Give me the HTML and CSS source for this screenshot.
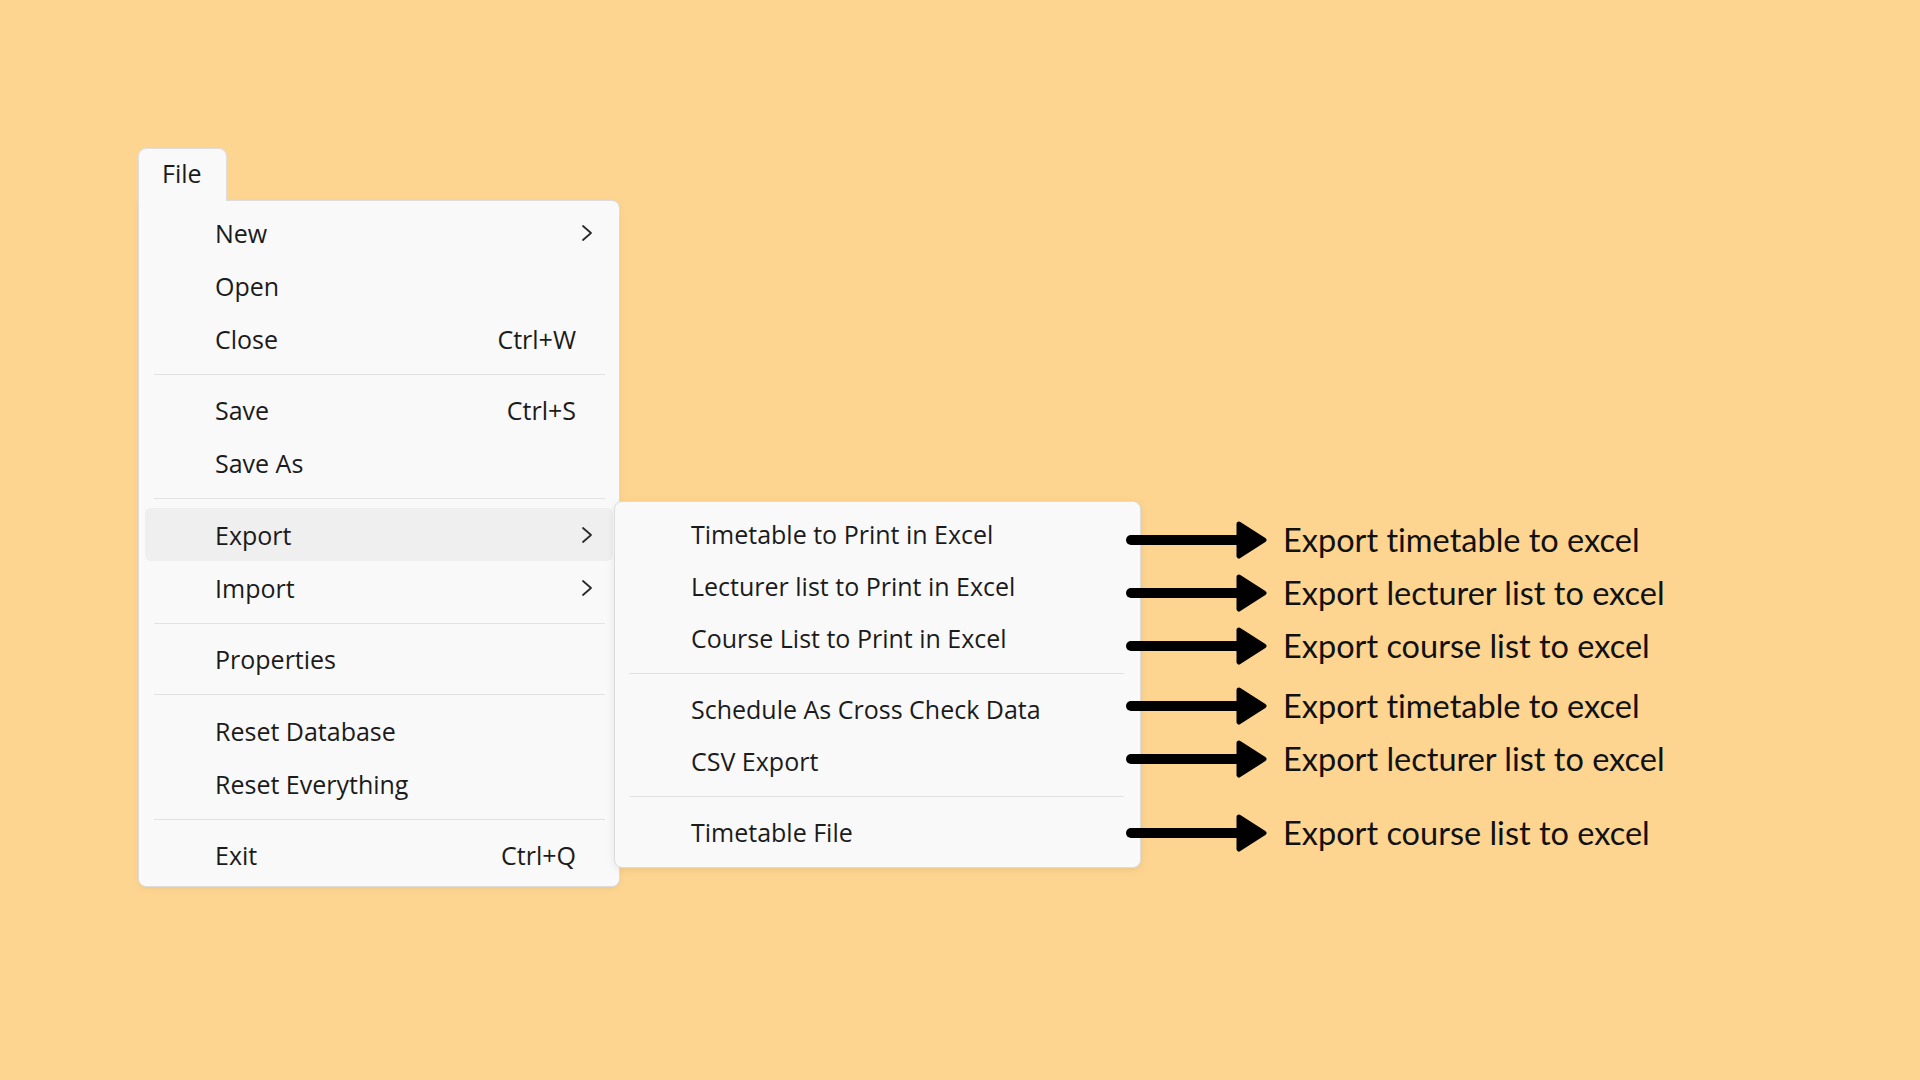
FILE: index.html
```html
<!DOCTYPE html>
<html lang="en">
<head>
  <meta charset="UTF-8" />
  <meta name="viewport" content="width=device-width, initial-scale=1.0"/>
  <title>File menu - Export</title>
  <link rel="stylesheet" href="styles.css">
</head>
<body>
  <div class="stage">
    <div class="menu-column">
      <div class="tab">File</div>
      <div class="menu">
        <div class="item"><span>New</span><svg class="chevron" viewBox="0 0 12 18"><polyline points="2,2 10,9 2,16"/></svg></div>
        <div class="item"><span>Open</span></div>
        <div class="item"><span>Close</span><span class="key">Ctrl+W</span></div>
        <div class="sep"></div>
        <div class="item"><span>Save</span><span class="key">Ctrl+S</span></div>
        <div class="item"><span>Save As</span></div>
        <div class="sep"></div>
        <div class="item active"><span>Export</span><svg class="chevron" viewBox="0 0 12 18"><polyline points="2,2 10,9 2,16"/></svg></div>
        <div class="item"><span>Import</span><svg class="chevron" viewBox="0 0 12 18"><polyline points="2,2 10,9 2,16"/></svg></div>
        <div class="sep"></div>
        <div class="item"><span>Properties</span></div>
        <div class="sep"></div>
        <div class="item"><span>Reset Database</span></div>
        <div class="item"><span>Reset Everything</span></div>
        <div class="sep"></div>
        <div class="item"><span>Exit</span><span class="key">Ctrl+Q</span></div>
      </div>
    </div>

    <div class="menu submenu">
      <div class="item"><span>Timetable to Print in Excel</span></div>
      <div class="item"><span>Lecturer list to Print in Excel</span></div>
      <div class="item"><span>Course List to Print in Excel</span></div>
      <div class="sep"></div>
      <div class="item"><span>Schedule As Cross Check Data</span></div>
      <div class="item"><span>CSV Export</span></div>
      <div class="sep"></div>
      <div class="item"><span>Timetable File</span></div>
    </div>

    <div class="notes">
      <div class="note">
        <svg class="arrow" viewBox="0 0 141 40"><line x1="5" y1="20" x2="118" y2="20"/><polygon points="113,4 138,20 113,36"/></svg>
        <span>Export timetable to excel</span>
      </div>
      <div class="note">
        <svg class="arrow" viewBox="0 0 141 40"><line x1="5" y1="20" x2="118" y2="20"/><polygon points="113,4 138,20 113,36"/></svg>
        <span>Export lecturer list to excel</span>
      </div>
      <div class="note">
        <svg class="arrow" viewBox="0 0 141 40"><line x1="5" y1="20" x2="118" y2="20"/><polygon points="113,4 138,20 113,36"/></svg>
        <span>Export course list to excel</span>
      </div>
      <div class="note gap-s">
        <svg class="arrow" viewBox="0 0 141 40"><line x1="5" y1="20" x2="118" y2="20"/><polygon points="113,4 138,20 113,36"/></svg>
        <span>Export timetable to excel</span>
      </div>
      <div class="note">
        <svg class="arrow" viewBox="0 0 141 40"><line x1="5" y1="20" x2="118" y2="20"/><polygon points="113,4 138,20 113,36"/></svg>
        <span>Export lecturer list to excel</span>
      </div>
      <div class="note gap-l">
        <svg class="arrow" viewBox="0 0 141 40"><line x1="5" y1="20" x2="118" y2="20"/><polygon points="113,4 138,20 113,36"/></svg>
        <span>Export course list to excel</span>
      </div>
    </div>
  </div>
</body>
</html>
```
FILE: styles.css
```css
* { margin: 0; padding: 0; box-sizing: border-box; }
body {
  background: #fed590; width: 1920px; height: 1080px; overflow: hidden;
  font-family: "Open Sans", "Noto Sans", sans-serif; color: #1b1b1b;
}

.stage {
  display: flex; align-items: flex-start;
  padding: 148px 0 0 138px;
}

.menu-column { display: flex; flex-direction: column; width: 482px; }

.tab {
  width: 89px; height: 53px; margin-bottom: -1px;
  padding: 6px 0 0 23px;
  background: #f9f9f9; border: 1px solid #dedede; border-bottom: none;
  border-radius: 8px 8px 0 0;
  font-size: 25px; line-height: 36px;
  position: relative; z-index: 1;
}

.menu {
  background: #f9f9f9; border: 1px solid #dcdcdc; border-radius: 8px;
  padding: 5px 6px 4.5px 6px;
  box-shadow: 0 2px 6px rgba(0, 0, 0, 0.06);
  font-size: 25px;
}

.menu-column .menu { border-top-left-radius: 0; }

.item {
  height: 53px; display: flex; align-items: center; justify-content: space-between;
  padding: 0 37px 0 70px; border-radius: 6px;
  white-space: nowrap;
}
.item.active { background: #efefef; }

.chevron {
  width: 12px; height: 18px; margin-right: -17px;
  fill: none; stroke: #2a2a2a; stroke-width: 1.8; stroke-linecap: round; stroke-linejoin: round;
}

.sep { height: 1px; background: #e2e2e2; margin: 8.5px 8px 9px 9px; }

.submenu {
  width: 527px; margin: 353px 0 0 -6px;
  padding: 6px 6px 9px 6px;
  box-shadow: 0 2px 8px rgba(0, 0, 0, 0.08);
}
.submenu .item { height: 52px; }
.submenu .sep { margin: 9px 10px 9px 8px; }

.notes {
  display: flex; flex-direction: column;
  margin: 365px 0 0 -15px;
}

.note {
  height: 53px; display: flex; align-items: center; gap: 16px;
  font-family: Lato, "Open Sans", sans-serif; font-size: 32.5px; color: #111;
  font-variant-ligatures: none;
  white-space: nowrap;
}
.note.gap-s { margin-top: 7px; }
.note.gap-l { margin-top: 21px; }

.arrow { width: 141px; height: 40px; flex: none; }
.arrow line { stroke: #000; stroke-width: 10; stroke-linecap: round; }
.arrow polygon { fill: #000; stroke: #000; stroke-width: 5; stroke-linejoin: round; }
```
